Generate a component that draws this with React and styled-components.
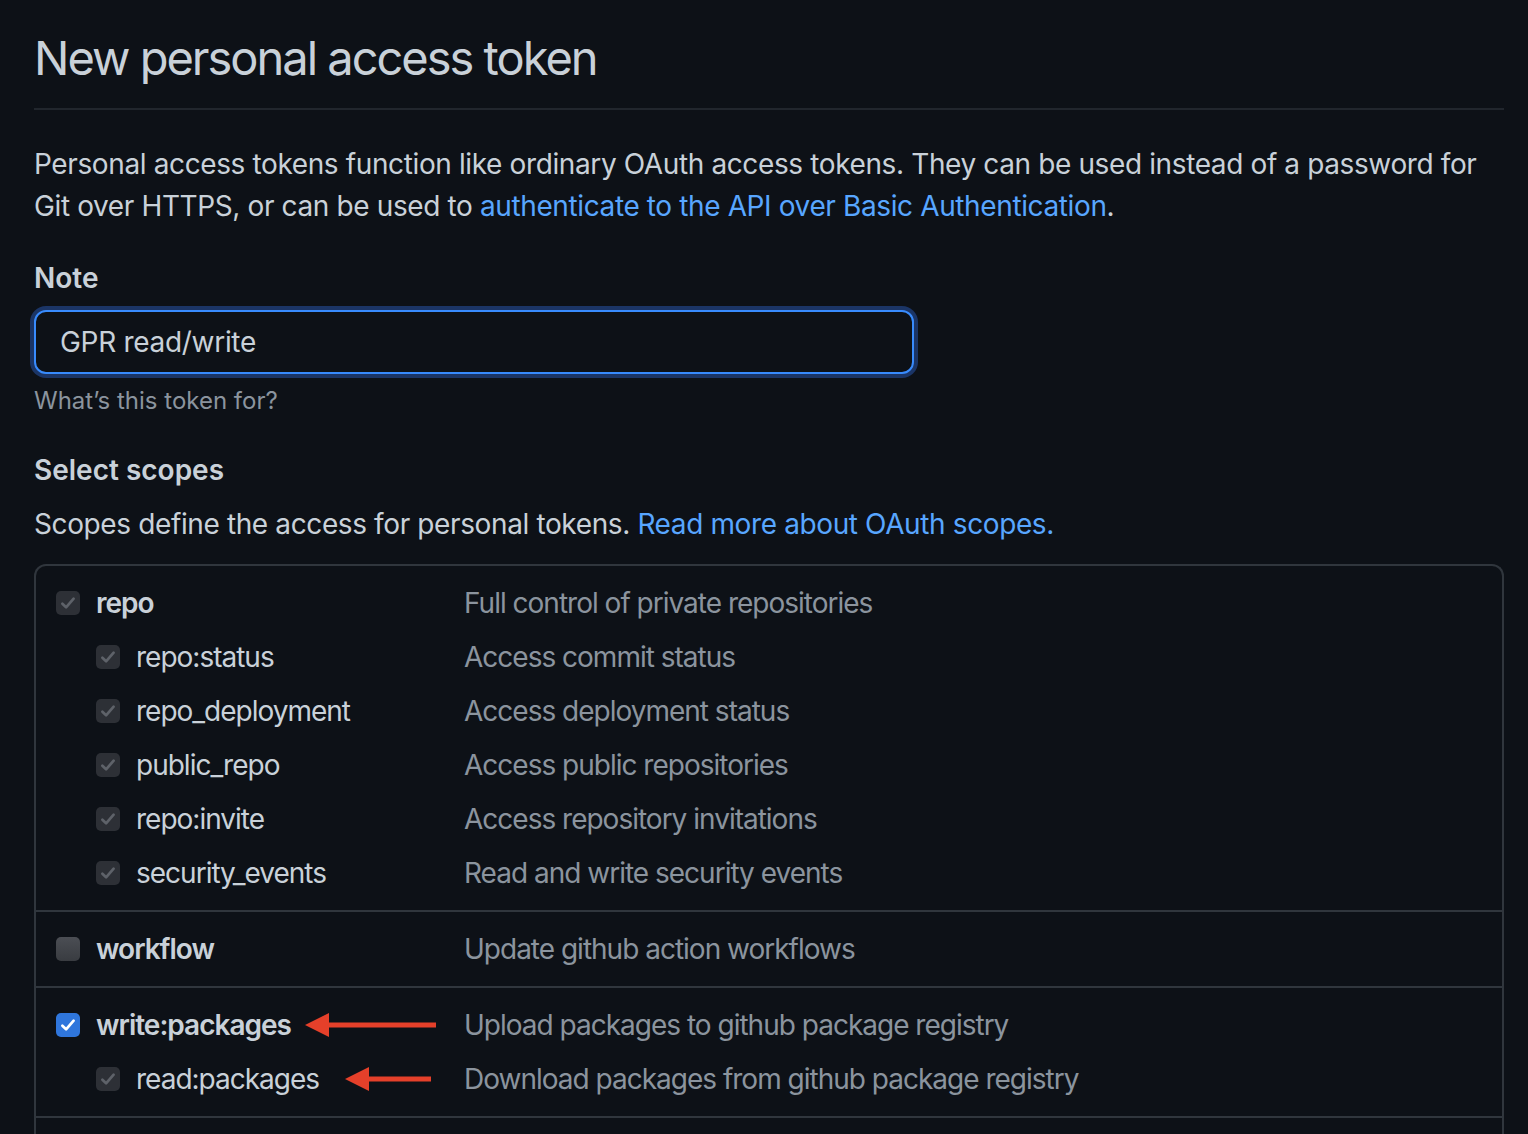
import React from 'react'
import styled, { createGlobalStyle } from 'styled-components'

const GlobalStyle = createGlobalStyle`
  html, body {
    margin: 0;
    padding: 0;
    background: #0d1117;
  }
  body {
    font-family: Inter, "Noto Sans", "Liberation Sans", sans-serif;
    color: #c9d1d9;
    -webkit-font-smoothing: antialiased;
  }
`

const Page = styled.main`
  padding: 26px 24px 0 34px;
`
const Title = styled.h1`
  margin: 0;
  font-size: 47px;
  font-weight: 400;
  line-height: 64px;
  letter-spacing: -2px;
  color: #c9d1d9;
  padding-bottom: 18px;
  border-bottom: 2px solid #21262d;
`
const Lead = styled.p`
  margin: ${(p) => p.top}px 0 0;
  font-size: 28px;
  line-height: 42px;
  letter-spacing: -0.38px;
`
const Link = styled.a`
  color: #58a6ff;
  text-decoration: none;
`
const Label = styled.h3`
  margin: ${(p) => p.top}px 0 0;
  font-size: 28px;
  line-height: 42px;
  font-weight: 600;
`
const NoteInput = styled.input`
  display: block;
  box-sizing: border-box;
  margin-top: 11px;
  width: 880px;
  height: 64px;
  padding: 0 24px;
  font: inherit;
  font-size: 28px;
  letter-spacing: -0.3px;
  color: #c9d1d9;
  background: #0d1117;
  border: 2px solid #388bfd;
  border-radius: 12px;
  outline: none;
  box-shadow: 0 0 0 4px #1b3566;
`
const Hint = styled.p`
  margin: 9px 0 0;
  font-size: 24px;
  line-height: 36px;
  color: #8b949e;
`
const ScopeBox = styled.div`
  margin-top: 19px;
  border: 2px solid #30363d;
  border-bottom: none;
  border-radius: 12px 12px 0 0;
`
const Group = styled.div`
  padding: 10px 0;
  border-bottom: 2px solid #30363d;
`
const Row = styled.div`
  position: relative;
  display: grid;
  grid-template-columns: 428px 1fr;
  align-items: center;
  height: 54px;
  font-size: 28px;
  letter-spacing: -1px;
`
const Name = styled.label`
  display: flex;
  align-items: center;
  gap: 16px;
  padding-left: ${(p) => (p.child ? 60 : 20)}px;
  font-weight: ${(p) => (p.child ? 400 : 600)};
  color: #c9d1d9;
`
const Box = styled.span`
  flex: none;
  display: flex;
  align-items: center;
  justify-content: center;
  width: 24px;
  height: 24px;
  border-radius: 5px;
  background: ${(p) =>
    p.state === 'on'
      ? '#2f76dc'
      : p.state === 'off'
      ? 'linear-gradient(#4b4e54, #393c41)'
      : '#2d3036'};
`
const Desc = styled.span`
  color: #8b949e;
`
const Arrow = styled.svg`
  position: absolute;
  top: 50%;
  left: ${(p) => p.x}px;
  transform: translateY(-50%);
`

const Check = ({ state }) => (
  <Box state={state}>
    {state !== 'off' && (
      <svg width="18" height="18" viewBox="0 0 16 16">
        <path
          d="M3 8.6 L6.3 11.8 L13 4.2"
          fill="none"
          stroke={state === 'on' ? '#ffffff' : '#5e6269'}
          strokeWidth="2.4"
          strokeLinecap="round"
          strokeLinejoin="round"
        />
      </svg>
    )}
  </Box>
)

const RedArrow = ({ x, w }) => (
  <Arrow x={x} width={w} height="26" viewBox={`0 0 ${w} 26`}>
    <path d={`M22 10.5 H${w} V15.5 H22 Z`} fill="#e5402a" />
    <path d="M0 13 L24 1 L24 25 Z" fill="#e5402a" />
  </Arrow>
)

const groups = [
  [
    { name: 'repo', desc: 'Full control of private repositories', state: 'dis' },
    { name: 'repo:status', desc: 'Access commit status', child: true },
    { name: 'repo_deployment', desc: 'Access deployment status', child: true },
    { name: 'public_repo', desc: 'Access public repositories', child: true },
    { name: 'repo:invite', desc: 'Access repository invitations', child: true },
    { name: 'security_events', desc: 'Read and write security events', child: true }
  ],
  [{ name: 'workflow', desc: 'Update github action workflows', state: 'off' }],
  [
    { name: 'write:packages', desc: 'Upload packages to github package registry', state: 'on', arrow: { x: 269, w: 131 } },
    { name: 'read:packages', desc: 'Download packages from github package registry', child: true, arrow: { x: 309, w: 86 } }
  ],
  [{ name: 'delete:packages', desc: 'Delete packages from github package registry', state: 'off' }]
]

export default function App () {
  return (
    <Page>
      <GlobalStyle />
      <Title>New personal access token</Title>
      <Lead top={33}>
        Personal access tokens function like ordinary OAuth access tokens. They can be used instead of a password for
        Git over HTTPS, or can be used to <Link href="#">authenticate to the API over Basic Authentication</Link>.
      </Lead>

      <Label top={30}>Note</Label>
      <NoteInput defaultValue="GPR read/write" />
      <Hint>What’s this token for?</Hint>

      <Label top={30}>Select scopes</Label>
      <Lead top={12}>
        Scopes define the access for personal tokens. <Link href="#">Read more about OAuth scopes.</Link>
      </Lead>

      <ScopeBox>
        {groups.map((rows, i) => (
          <Group key={i}>
            {rows.map((r) => (
              <Row key={r.name}>
                <Name child={r.child}>
                  <Check state={r.state || 'dis'} />
                  {r.name}
                </Name>
                <Desc>{r.desc}</Desc>
                {r.arrow && <RedArrow x={r.arrow.x} w={r.arrow.w} />}
              </Row>
            ))}
          </Group>
        ))}
      </ScopeBox>
    </Page>
  )
}
